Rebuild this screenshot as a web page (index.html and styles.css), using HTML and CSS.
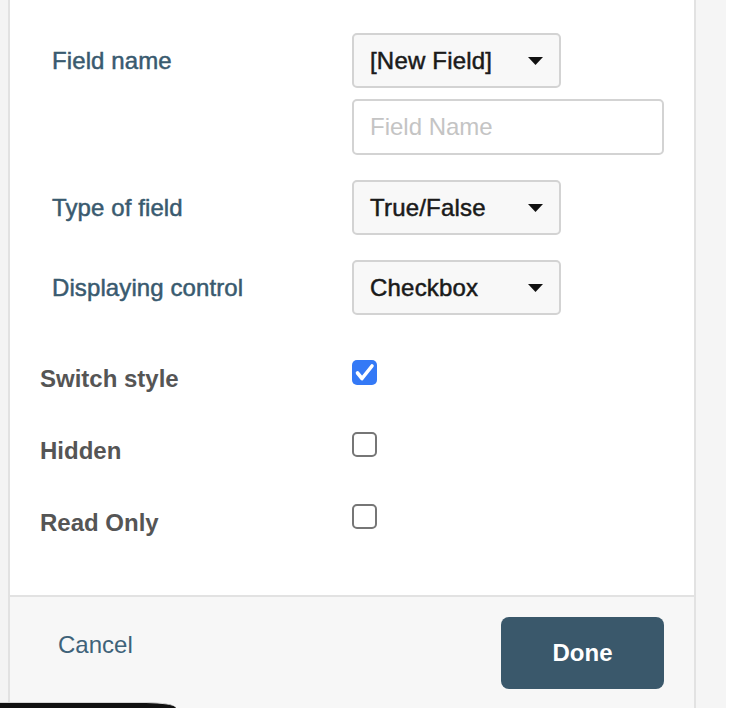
FILE: index.html
```html
<!DOCTYPE html>
<html>
<head>
<meta charset="utf-8">
<link rel="stylesheet" href="styles.css">
</head>
<body>
<div class="page">
  <div class="main">
    <div class="gutter-left"></div>
    <div class="panel">
      <div class="panel-body">
        <div class="field-row">
          <div class="field-label">Field name</div>
          <div class="field-controls">
            <div class="select">
              <span class="select-text">[New Field]</span>
              <svg class="caret" width="15" height="8" viewBox="0 0 15 8"><polygon points="0,0 15,0 7.5,8" fill="#111"/></svg>
            </div>
            <div class="text-input"><span class="placeholder">Field Name</span></div>
          </div>
        </div>
        <div class="field-row">
          <div class="field-label">Type of field</div>
          <div class="field-controls">
            <div class="select">
              <span class="select-text">True/False</span>
              <svg class="caret" width="15" height="8" viewBox="0 0 15 8"><polygon points="0,0 15,0 7.5,8" fill="#111"/></svg>
            </div>
          </div>
        </div>
        <div class="field-row">
          <div class="field-label">Displaying control</div>
          <div class="field-controls">
            <div class="select">
              <span class="select-text">Checkbox</span>
              <svg class="caret" width="15" height="8" viewBox="0 0 15 8"><polygon points="0,0 15,0 7.5,8" fill="#111"/></svg>
            </div>
          </div>
        </div>

        <div class="checks">
          <div class="check-row">
            <div class="check-label">Switch style</div>
            <div class="checkbox checked">
              <svg width="25" height="25" viewBox="0 0 25 25"><polyline points="5.5,13 10,18.5 20,6" fill="none" stroke="#fff" stroke-width="3.6" stroke-linecap="round" stroke-linejoin="round"/></svg>
            </div>
          </div>
          <div class="check-row">
            <div class="check-label">Hidden</div>
            <div class="checkbox"></div>
          </div>
          <div class="check-row">
            <div class="check-label">Read Only</div>
            <div class="checkbox"></div>
          </div>
        </div>
      </div>
      <div class="panel-footer">
        <div class="cancel">Cancel</div>
        <div class="done">Done</div>
      </div>
    </div>
    <div class="gutter-right"></div>
  </div>
  <div class="bottom-bar"></div>
</div>
</body>
</html>
```

FILE: styles.css
```css
* { box-sizing: border-box; }
html, body {
  margin: 0;
  padding: 0;
  background: #ffffff;
  font-family: "Liberation Sans", Arial, sans-serif;
  overflow: hidden;
}
.page {
  position: relative;
  width: 732px;
  height: 708px;
}
.main {
  display: flex;
  height: 708px;
}
.gutter-left {
  width: 8px;
  background: #f4f4f4;
}
.panel {
  width: 688px;
  border-left: 2px solid #e2e2e2;
  border-right: 2px solid #e2e2e2;
  display: flex;
  flex-direction: column;
  background: #ffffff;
}
.gutter-right {
  width: 30px;
  background: #f5f5f5;
}
.panel-body {
  height: 595px;
  padding-top: 33px;
}
.field-row {
  display: flex;
  padding-left: 42px;
  margin-bottom: 25px;
}
.field-label {
  width: 300px;
  height: 55px;
  display: flex;
  align-items: center;
  font-size: 24px;
  line-height: 28px;
  color: #395a6f;
  -webkit-text-stroke: 0.5px #395a6f;
  letter-spacing: 0.1px;
}
.field-controls {
  display: flex;
  flex-direction: column;
  gap: 11px;
}
.select {
  width: 209px;
  height: 55px;
  border: 2px solid #d3d3d3;
  border-radius: 5px;
  background: #f8f8f8;
  display: flex;
  align-items: center;
  justify-content: space-between;
  padding: 0 16px 0 16px;
}
.select-text {
  font-size: 24px;
  line-height: 28px;
  color: #1a1a1a;
  -webkit-text-stroke: 0.5px #1a1a1a;
  letter-spacing: 0.2px;
}
.caret { display: block; }
.text-input {
  width: 312px;
  height: 56px;
  border: 2px solid #d3d3d3;
  border-radius: 5px;
  background: #ffffff;
  display: flex;
  align-items: center;
  padding-left: 16px;
}
.placeholder {
  font-size: 24px;
  line-height: 28px;
  color: #c4c4c4;
}
.checks {
  padding-left: 30px;
  margin-top: 45px;
  display: flex;
  flex-direction: column;
  gap: 39px;
}
.check-row {
  display: flex;
  align-items: flex-start;
  height: 33px;
}
.check-label {
  width: 312px;
  padding-top: 5px;
  font-size: 24px;
  line-height: 28px;
  font-weight: bold;
  color: #555555;
}
.checkbox {
  width: 25px;
  height: 25px;
  border: 2px solid #767676;
  border-radius: 5px;
  background: #ffffff;
}
.checkbox.checked {
  border: none;
  background: #3479f6;
}
.checkbox svg { display: block; }
.panel-footer {
  flex: 1;
  border-top: 2px solid #e2e2e2;
  background: #f7f7f7;
  display: flex;
  justify-content: space-between;
  align-items: flex-start;
  padding: 20px 30px 0 48px;
}
.cancel {
  margin-top: 14px;
  font-size: 24px;
  line-height: 28px;
  color: #3e6279;
}
.done {
  width: 163px;
  height: 72px;
  border-radius: 8px;
  background: #3a586b;
  color: #ffffff;
  font-size: 24px;
  font-weight: bold;
  display: flex;
  align-items: center;
  justify-content: center;
}
.bottom-bar {
  position: absolute;
  left: 0;
  bottom: 0;
  width: 176px;
  height: 6px;
  background: #111111;
  border-top: 1px solid #d6d6d6;
  border-top-right-radius: 30px 6px;
}
```
